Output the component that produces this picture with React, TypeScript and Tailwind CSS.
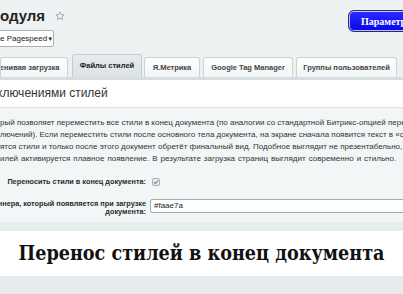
import React from "react";

const tabs = [
  { label: "Ленивая загрузка", w: "w-[68px]", ml: "ml-0", active: false, clip: true },
  { label: "Файлы стилей", w: "w-[70px]", ml: "ml-[4px]", active: true, clip: false },
  { label: "Я.Метрика", w: "w-[56px]", ml: "ml-[2px]", active: false, clip: false },
  { label: "Google Tag Manager", w: "w-[90px]", ml: "ml-[3px]", active: false, clip: false },
  { label: "Группы пользователей", w: "w-[101px]", ml: "ml-[3px]", active: false, clip: false },
];

export default function App() {
  return (
    <div className="w-[403px] h-[294px] overflow-hidden bg-[linear-gradient(180deg,#eef2f3_0%,#e6ecee_100%)] font-['Liberation_Sans',Arial,sans-serif] text-[#333] flex flex-col">
      {/* header */}
      <div className="h-[55px] flex justify-between shrink-0">
        <div className="flex flex-col">
          <div className="mt-[7px] h-[17px] flex items-center">
            <span className="text-[15px] leading-[17px] font-bold text-[#222]">одуля</span>
            <svg className="ml-[10px] mt-[1px]" width="10" height="10" viewBox="0 0 24 24" fill="none" stroke="#9aa3a8" strokeWidth="2.2">
              <path d="M12 2.5l2.9 6.1 6.6.8-4.9 4.6 1.3 6.6L12 17.3l-5.9 3.3 1.3-6.6-4.9-4.6 6.6-.8z" strokeLinejoin="round" />
            </svg>
          </div>
          <div className="mt-[6px] h-[17px] w-[57px] -ml-[3px] bg-white border border-[#a9b2b6] rounded-[2px] flex items-center justify-between pl-[2px] pr-[4px]">
            <span className="text-[8px] leading-none text-[#222] whitespace-nowrap">e Pagespeed</span>
            <span className="text-[6px] leading-none text-[#222]">▼</span>
          </div>
        </div>
        <div className="mt-[10px] h-[22px] w-[72px] -mr-[17px] rounded-[6px] border border-[#2a2a70] bg-[linear-gradient(180deg,#2b2bff_0%,#0606f0_100%)] shadow-[inset_0_0_0_1px_rgba(255,255,255,0.75)] flex items-center pl-[12px]">
          <span className="text-white text-[10px] font-bold font-['Liberation_Serif',serif] whitespace-nowrap">Параметры</span>
        </div>
      </div>

      {/* tabs */}
      <div className="h-[22px] flex items-end shrink-0">
        {tabs.map((t) => (
          <div
            key={t.label}
            className={`${t.w} ${t.ml} shrink-0 border border-b-0 rounded-t-[3px] flex items-center justify-center overflow-hidden ${
              t.active
                ? "h-[23px] border-[#c4cccf] bg-[linear-gradient(180deg,#e6ebed_0%,#dbe2e5_100%)]"
                : "h-[20px] border-[#ccd3d6] bg-[linear-gradient(180deg,#ffffff_0%,#f1f4f5_100%)]"
            }`}
          >
            <span
              className={`text-[7.5px] font-bold whitespace-nowrap ${t.active ? "text-[#222]" : "text-[#444]"} ${
                t.clip ? "-ml-[14px]" : ""
              }`}
            >
              {t.label}
            </span>
          </div>
        ))}
      </div>
      <div className="h-[3px] bg-[#d6dcdf] shrink-0" />

      {/* heading */}
      <div className="h-[28px] bg-white border-b border-[#dde2e4] flex items-center shrink-0 overflow-hidden">
        <span className="text-[12px] leading-[14px] text-[#333] whitespace-nowrap -ml-[3px] -mt-[1px]">
          ключениями стилей
        </span>
      </div>

      {/* content */}
      <div className="h-[114px] bg-[#f3f6f7] shrink-0 overflow-hidden pt-[9px]">
        <div className="text-[8px] leading-[12px] text-[#333] whitespace-nowrap">
          <div>рый позволяет переместить все стили в конец документа (по аналогии со стандартной Битрикс-опцией переноса</div>
          <div>лючений). Если переместить стили после основного тела документа, на экране сначала появится текст в «сыром»</div>
          <div>ятся стили и только после этого документ обретёт финальный вид. Подобное выглядит не презентабельно, поэтому</div>
          <div className="[word-spacing:0.8px]">илей активируется плавное появление. В результате загрузка страниц выглядит современно и стильно.</div>
        </div>
        <div className="mt-[11px] h-[12px] flex items-center">
          <div className="w-[146px] text-right text-[7.3px] font-bold text-[#2a2a2a] whitespace-nowrap">Переносить стили в конец документа:</div>
          <div className="ml-[6px] w-[8px] h-[8px] rounded-[2px] border border-[#a8b0b4] bg-[#e9eced] flex items-center justify-center">
            <svg width="6" height="6" viewBox="0 0 10 10" fill="none" stroke="#6d767b" strokeWidth="1.8">
              <path d="M1.5 5.2l2.3 2.3 4.7-5" />
            </svg>
          </div>
        </div>
        <div className="mt-[11px] flex items-start">
          <div className="w-[146px] text-right text-[7.3px] font-bold leading-[8px] text-[#2a2a2a] whitespace-nowrap flex flex-col items-end pt-[1px] overflow-hidden">
            <span>ннера, который появляется при загрузке</span>
            <span>документа:</span>
          </div>
          <div className="ml-[4px] flex-1 h-[14px] bg-white border border-[#a3abaf] rounded-[2px] flex items-center pl-[3px] -mr-[10px]">
            <span className="text-[8px] text-[#222]">#faae7a</span>
          </div>
        </div>
      </div>

      <div className="h-[9px] shrink-0" />

      {/* banner */}
      <div className="h-[45px] bg-white shrink-0 flex items-center justify-center">
        <span className="font-['DejaVu_Serif_Condensed','DejaVu_Serif',serif] [font-stretch:condensed] font-bold text-[19.6px] text-[#111] whitespace-nowrap">
          Перенос стилей в конец документа
        </span>
      </div>
    </div>
  );
}
